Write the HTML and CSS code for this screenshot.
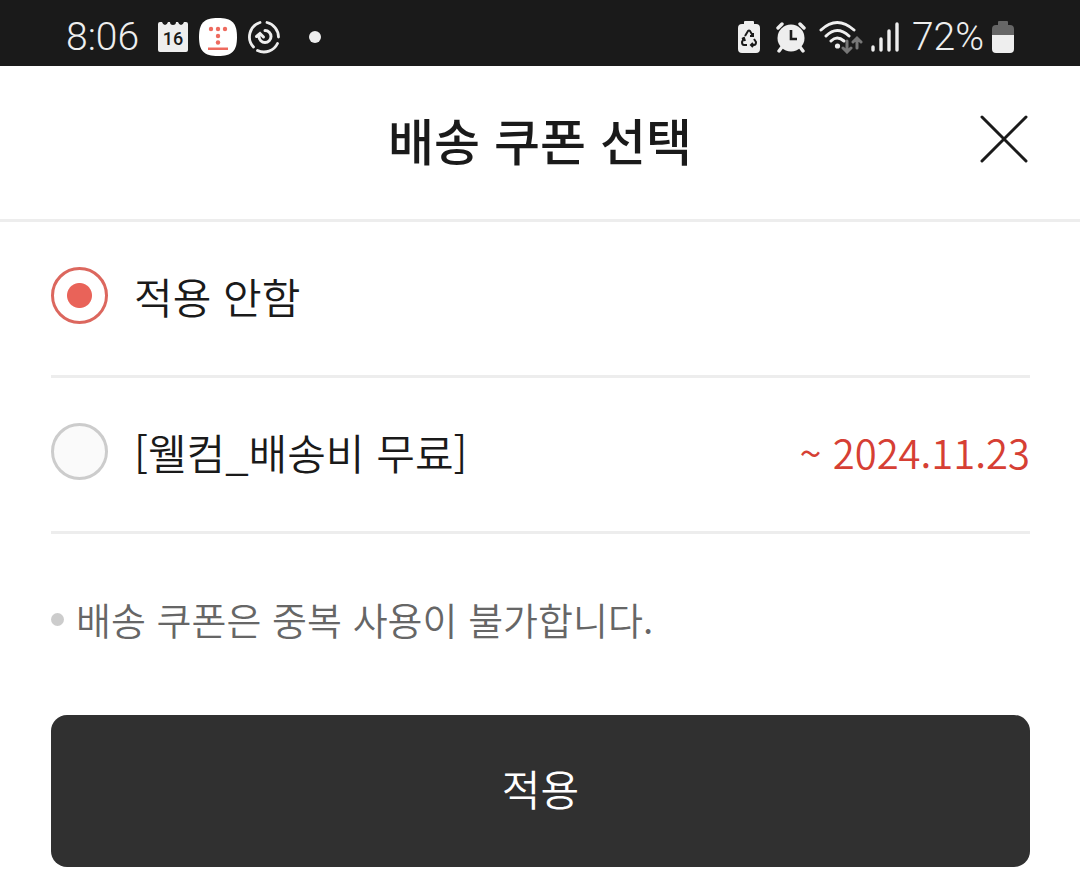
FILE: index.html
```html
<!DOCTYPE html>
<html lang="ko">
<head>
    <meta charset="utf-8">
    <meta name="viewport" content="width=device-width, initial-scale=1.0">
    <title>배송 쿠폰 선택</title>
    <link rel="stylesheet" href="styles.css">
</head>

<body>
    <!-- Status bar -->
    <div class="status-bar">
        <div class="status-left">
            <span class="clock">8:06</span>
            <svg class="icon-calendar" width="30" height="32" viewBox="0 0 30 32">
                <path fill="#eee" d="M2 1h2q1 3 3 3t3-3h2q0 3 3 3t3-3h2q1 3 3 3t3-3h2q2 0 2 2v26q0 2-2 2H2q-2 0-2-2V3q0-2 2-2z"/>
                <text x="15" y="24" text-anchor="middle" class="calendar-day">16</text>
            </svg>
            <svg class="icon-app" width="38" height="38" viewBox="0 0 38 38">
                <path fill="#fff" d="M19 0C33 0 38 5 38 19S33 38 19 38 0 33 0 19 5 0 19 0z"/>
                <g fill="#ee6a5e">
                    <circle cx="12" cy="11" r="2.2"/>
                    <circle cx="19" cy="11" r="2.2"/>
                    <circle cx="26" cy="11" r="2.2"/>
                    <circle cx="19" cy="18" r="2.2"/>
                    <circle cx="19" cy="24.5" r="2.2"/>
                    <path d="M9 29.5h20v2.5H9z"/>
                </g>
            </svg>
            <svg class="icon-sync" width="32" height="34" viewBox="0 0 32 34" fill="none" stroke="#eee" stroke-width="2.8" stroke-linecap="round">
                <path d="M12 2.5A15 15 0 0 0 5.5 27M9.500 30.500A15 15 0 0 0 29.500 23.500M19 2.500A15 15 0 0 1 30.500 17"/>
                <path d="M17 10.500A6 6 0 1 1 11 16.500M8.500 16.500l3.500-3 3.500 3.500" stroke-width="3"/>
            </svg>
            <span class="status-dot"></span>
        </div>
        <div class="status-right">
            <svg class="icon-saver" width="22" height="32" viewBox="0 0 22 32">
                <path fill="#eee" d="M7 0h8q1 0 1 1v2h2q4 0 4 4v21q0 4-4 4H4q-4 0-4-4V7q0-4 4-4h2V1q0-1 1-1z"/>
                <g fill="none" stroke="#1a1a1a" stroke-width="2">
                    <path d="M7 15l3-5q1-1 2 0l3 5M16 18l2 3q0 3-2 3h-3M9 24H6q-2 0-2-3l2-4"/>
                    <path d="M12 15h3v-3M15 22l-2 2 2 2M4 18l2-1 1 3"/>
                </g>
            </svg>
            <svg class="icon-alarm" width="30" height="32" viewBox="0 0 30 32">
                <g stroke="#eee" stroke-width="3.4" stroke-linecap="round">
                    <path d="M2 7l4-4M28 7l-4-4M6 26l-3 4M24 26l3 4"/>
                </g>
                <circle cx="15" cy="17" r="13.5" fill="#eee"/>
                <path d="M15 9v9h6" fill="none" stroke="#1a1a1a" stroke-width="2.6"/>
            </svg>
            <svg class="icon-wifi" width="44" height="34" viewBox="0 0 44 34" fill="none" stroke-linecap="round">
                <path stroke="#eee" stroke-width="3" d="M2 10Q18-5 35 10M7 16Q18 5 30 16M12 21q6-6 13 0"/>
                <circle cx="18.5" cy="26" r="2.6" fill="#eee"/>
                <path stroke="#777" stroke-width="3" d="M28 21v10M24 28l4 4 4-4M38 28V19M34 22l4-4 4 4"/>
            </svg>
            <svg class="icon-signal" width="28" height="32" viewBox="0 0 28 32" stroke="#eee" stroke-width="3.4" stroke-linecap="round">
                <path d="M2 26v3M10 18v11M18 10v19M26 3v26"/>
            </svg>
            <span class="battery-level">72%</span>
            <svg class="icon-battery" width="22" height="32" viewBox="0 0 22 32">
                <path fill="#666" d="M7 0h8q1 0 1 1v3h2q4 0 4 4v6H0V8q0-4 4-4h2V1q0-1 1-1z"/>
                <path fill="#eee" d="M0 14h22v14q0 4-4 4H4q-4 0-4-4z"/>
            </svg>
        </div>
    </div>

    <header class="header">
        <h1>배송 쿠폰 선택</h1>
        <button class="close-button" type="button" aria-label="닫기">
            <svg width="48" height="48" viewBox="0 0 48 48" stroke="#1a1a1a" stroke-width="3" stroke-linecap="round">
                <path d="M2 2l44 44M46 2L2 46"/>
            </svg>
        </button>
    </header>

    <main>
        <form>
            <!-- Coupons -->
            <div class="coupon">
                <input type="radio" name="coupon" id="coupon_none" checked>
                <label for="coupon_none">적용 안함</label>
            </div>
            <div class="coupon">
                <input type="radio" name="coupon" id="coupon_welcome">
                <label for="coupon_welcome">[웰컴_배송비 무료]</label>
                <span class="expiry">~ 2024.11.23</span>
            </div>

            <p class="notice">배송 쿠폰은 중복 사용이 불가합니다.</p>

            <button class="apply-button" type="button">적용</button>
        </form>
    </main>
</body>
</html>
```
FILE: styles.css
```css
* {
    margin: 0;
    box-sizing: border-box;
}

body {
    background-color: white;
    color: #1a1a1a;
    font-family: "Noto Sans CJK KR", sans-serif;
    font-weight: 350;
}

/* Status bar */
.status-bar {
    display: flex;
    justify-content: space-between;
    height: 66px;
    padding: 8px 66px 0 66px;
    background-color: #1a1a1a;
    color: #eee;
    font-family: Roboto, sans-serif;
    font-size: 39px;
    font-weight: 350;
    line-height: 60px;
}

.status-left,
.status-right {
    display: flex;
    align-items: center;
    gap: 11px;
}

.icon-calendar {
    margin-left: 8px;
}

.calendar-day {
    fill: #1a1a1a;
    font-size: 18px;
    font-weight: 500;
}

.status-dot {
    width: 12px;
    height: 12px;
    margin-left: 18px;
    border-radius: 50%;
    background-color: #eee;
}

.status-right {
    gap: 8px;
}

.icon-saver {
    margin-right: 8px;
}

.icon-alarm,
.icon-signal {
    margin-right: 5px;
}

/* Header */
.header {
    display: grid;
    grid-template-columns: 1fr auto 1fr;
    align-items: center;
    height: 156px;
    padding: 0 52px 8px;
    border-bottom: 3px solid #ededed;
}

h1 {
    grid-column: 2;
    font-size: 50px;
    font-weight: 500;
    line-height: 72px;
}

.close-button {
    justify-self: end;
    padding: 0;
    border: none;
    background: none;
    cursor: pointer;
}

.close-button svg {
    display: block;
}

main {
    padding: 0 50px 0 51px;
}

/* Coupons */
.coupon {
    display: flex;
    align-items: center;
    gap: 26px;
    height: 156px;
    padding-bottom: 6px;
    border-bottom: 3px solid #ededed;
    font-size: 42px;
    line-height: 60px;
}

.coupon input {
    appearance: none;
    width: 57px;
    height: 57px;
    border: 3px solid #ccc;
    border-radius: 50%;
    background-color: #fafafa;
}

.coupon input:checked {
    border-color: #dc675e;
    background: radial-gradient(circle, #e96359 12px, white 13px);
}

.expiry {
    margin-left: auto;
    color: #d63f34;
    font-size: 40px;
}

.notice {
    display: flex;
    align-items: center;
    gap: 12px;
    padding: 57px 0 68px;
    color: #666;
    font-size: 38px;
    line-height: 56px;
}

.notice::before {
    content: "";
    width: 13px;
    height: 13px;
    border-radius: 50%;
    background-color: #ccc;
}

.apply-button {
    display: block;
    width: 100%;
    height: 152px;
    padding-bottom: 8px;
    border: none;
    border-radius: 16px;
    background-color: #303030;
    color: white;
    font-family: inherit;
    font-size: 42px;
    font-weight: 350;
    cursor: pointer;
}
```
